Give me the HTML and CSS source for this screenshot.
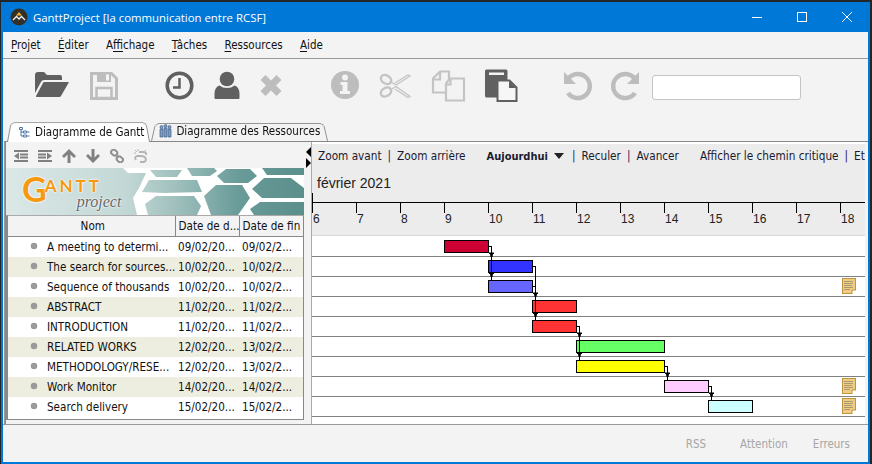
FILE: index.html
```html
<!DOCTYPE html>
<html lang="fr">
  <head>
    <meta charset="UTF-8" />
    <title>GanttProject [la communication entre RCSF]</title>
    <link rel="stylesheet" href="styles.css">
  </head>
  <body>
    <div class="window">
      <div class="titlebar">
        <svg class="app-icon" width="18" height="18" viewBox="0 0 18 18">
          <circle cx="9" cy="9" r="8.5" fill="#333028"/>
          <path d="M9 4l3 3.5H6z" fill="#f0b030"/>
          <path d="M3 12l3.5-3.5L9 11l2.5-2.500L15 12" fill="none" stroke="#eee" stroke-width="1.300"/>
        </svg>
        <span class="title-text">GanttProject [la communication entre RCSF]</span>
        <div class="win-controls">
          <svg width="10" height="10" viewBox="0 0 10 10"><path d="M0 5.500h10" stroke="#fff"/></svg>
          <svg width="10" height="10" viewBox="0 0 10 10"><rect x=".5" y=".5" width="9" height="9" fill="none" stroke="#fff"/></svg>
          <svg width="10" height="10" viewBox="0 0 10 10"><path d="M0 0l10 10M10 0L0 10" stroke="#fff"/></svg>
        </div>
      </div>

      <div class="menubar">
        <span><u>P</u>rojet</span>
        <span><u>É</u>diter</span>
        <span>A<u>f</u>fichage</span>
        <span><u>T</u>âches</span>
        <span><u>R</u>essources</span>
        <span><u>A</u>ide</span>
      </div>

      <div class="toolbar">
        <!-- ouvrir -->
        <svg class="tool" viewBox="0 0 36 36">
          <path d="M1 26V8q0-3 3-3h6l3 3h13q2 0 2 2v3H10q-2 0-3 2z" fill="#606060"/>
          <path d="M10 15h24q1 0 .5 1L27 29q-.5 1-2 1H3q-1.500 0-1-1l7-13q.3-1 1-1z" fill="#606060"/>
        </svg>
        <!-- enregistrer -->
        <svg class="tool gap-16" viewBox="0 0 36 36">
          <path d="M5.500 6.500h20l5 5v20h-25z" fill="none" stroke="#bdbdbd" stroke-width="3"/>
          <path d="M11 6h14v9H11z" fill="#bdbdbd"/>
          <path d="M20 7.500h3v6h-3z" fill="#f3f3f3"/>
          <path d="M10.500 21h15v10h-15z" fill="none" stroke="#bdbdbd" stroke-width="2.500"/>
        </svg>
        <!-- tache -->
        <svg class="tool gap-40" viewBox="0 0 36 36">
          <circle cx="17.500" cy="18.500" r="12.300" fill="none" stroke="#606060" stroke-width="3.500"/>
          <path d="M17.500 11v9.500H11" fill="none" stroke="#606060" stroke-width="2.500"/>
        </svg>
        <!-- ressource -->
        <svg class="tool gap-11" viewBox="0 0 36 36">
          <circle cx="18" cy="12" r="7.300" fill="#606060"/>
          <path d="M6.500 32q-1 0-1-1v-4q0-7 5-8.500 3 2.500 7.500 2.500t7.500-2.500q5 1.500 5 8.500v4q0 1-1 1z" fill="#606060"/>
        </svg>
        <!-- supprimer -->
        <svg class="tool gap-8" viewBox="0 0 36 36">
          <path d="M10 10.500l16 16M26 10.500l-16 16" stroke="#bdbdbd" stroke-width="7"/>
        </svg>
        <!-- proprietes -->
        <svg class="tool gap-38" viewBox="0 0 36 36">
          <circle cx="18" cy="18" r="14" fill="#bdbdbd"/>
          <circle cx="18" cy="10.500" r="3" fill="#f3f3f3"/>
          <path d="M13.500 15h7v9h2.500v3h-10v-3h2.500v-6h-2z" fill="#f3f3f3"/>
        </svg>
        <!-- couper -->
        <svg class="tool gap-15" viewBox="0 0 36 36">
          <g fill="none" stroke="#c4c4c4">
            <ellipse cx="8" cy="12.500" rx="5.500" ry="4" stroke-width="2.500" transform="rotate(30 8 12.500)"/>
            <ellipse cx="8" cy="25" rx="5.500" ry="4" stroke-width="2.500" transform="rotate(-30 8 25)"/>
            <path d="M13 15l5 3 14-9-2-1-13 8M13 22.500l5-3 14 10-2 1-13-8.500" stroke-width="1.300"/>
          </g>
        </svg>
        <!-- copier -->
        <svg class="tool gap-16" viewBox="0 0 36 36">
          <g fill="#f3f3f3" stroke="#c4c4c4" stroke-width="2.200">
            <path d="M10 4.500h9v21H3V11.500z"/>
            <path d="M10 5v7.500H3" fill="none"/>
            <path d="M20 11.500h14v22H16v-17z"/>
            <path d="M20.500 12v5.500H16.500" fill="none"/>
          </g>
        </svg>
        <!-- coller -->
        <svg class="tool gap-16" viewBox="0 0 36 36">
          <path d="M3 4q0-1.500 1.500-1.500h19.500q1.500 0 1.500 1.500v25q0 1.500-1.500 1.500H4.500Q3 30.500 3 29z" fill="#606060"/>
          <path d="M7 5.500h15v2.500H7z" fill="#f3f3f3"/>
          <path d="M15.500 13.500h12l7 7v13.500h-19z" fill="#f6f6f6" stroke="#606060" stroke-width="2"/>
          <path d="M27 14v7h7z" fill="#606060"/>
        </svg>
        <!-- annuler -->
        <svg class="tool gap-41" viewBox="0 0 36 36">
          <path d="M9.500 11.500A12 12 0 1 1 9 26" fill="none" stroke="#bdbdbd" stroke-width="4.500"/>
          <path d="M5 5v12h12z" fill="#bdbdbd"/>
        </svg>
        <!-- refaire -->
        <svg class="tool gap-13" viewBox="0 0 36 36">
          <path d="M26.500 11.500A12 12 0 1 0 27 26" fill="none" stroke="#bdbdbd" stroke-width="4.500"/>
          <path d="M31 5v12H19z" fill="#bdbdbd"/>
        </svg>
        <input class="search" type="text" />
      </div>

      <div class="tabs">
        <div class="tab active">
          <svg width="12" height="12" viewBox="0 0 12 12">
            <path d="M1.500 1.500h3v2h-3zM5.500 5h3v2h-3zM5.500 9h3v2h-3zM3 3.500V10h2.500M3 6h2.500M9 6h2.500M9 10h2.500" fill="none" stroke="#4f74a8"/>
          </svg>
          Diagramme de Gantt
        </div>
        <div class="tab">
          <svg width="13" height="14" viewBox="0 0 13 14">
            <g fill="#7f9cc0" stroke="#3f5f88" stroke-width=".7">
              <circle cx="2.500" cy="3" r="1.500"/><circle cx="10.500" cy="3" r="1.500"/>
              <path d="M1 5h3v8H1zM9 5h3v8H9z"/>
              <circle cx="6.500" cy="2" r="1.500"/><path d="M5 4h3v9H5z"/>
            </g>
          </svg>
          Diagramme des Ressources
        </div>
      </div>

      <div class="main">
        <div class="left">
          <div class="tree-tools">
            <svg width="14" height="12" viewBox="0 0 14 12"><path d="M0 0h14v2H0zM6 3.500h8v2H6zM6 6.500h8v2H6zM0 10h14v2H0zM5 2.500v7L0 6z" fill="#808080"/></svg>
            <svg width="14" height="12" viewBox="0 0 14 12"><path d="M0 0h14v2H0zM0 3.500h8v2H0zM0 6.500h8v2H0zM0 10h14v2H0zM9 2.500v7L14 6z" fill="#808080"/></svg>
            <svg width="14" height="14" viewBox="0 0 14 14"><path d="M7 0l7 7-2 2-3.500-3.500V14h-3V5.500L2 9 0 7z" fill="#808080"/></svg>
            <svg width="14" height="14" viewBox="0 0 14 14"><path d="M7 14L0 7l2-2 3.500 3.500V0h3v8.500L12 5l2 2z" fill="#808080"/></svg>
            <svg width="14" height="14" viewBox="0 0 14 14"><g fill="none" stroke="#909090" stroke-width="2"><rect x="1" y="1" width="6.500" height="5" rx="2.500" transform="rotate(40 4 3.500)"/><rect x="6.500" y="8" width="6.500" height="5" rx="2.500" transform="rotate(40 10 10.500)"/><path d="M5.500 5.500l3 3" stroke-width="1.500"/></g></svg>
            <svg width="14" height="14" viewBox="0 0 14 14"><g fill="none" stroke="#b4b4b4"><path d="M5 3h4q4 0 3 3M2 11q-2-3 1-4h4q4 0 5 3 0 3-3 3H6" stroke-width="1.800"/><path d="M1 1l2 2M4 0v2M0 4h2M12 1l-1 1" stroke-width="1"/></g></svg>
          </div>

          <div class="logo">
            <svg class="logo-bg" width="298" height="47" viewBox="0 0 298 47">
              <defs>
                <linearGradient id="hexa" gradientUnits="userSpaceOnUse" x1="0" y1="0" x2="298" y2="0">
                  <stop offset="0" stop-color="#dbe8e7"/>
                  <stop offset=".4" stop-color="#c3d8d6"/>
                  <stop offset=".58" stop-color="#9dbfbc"/>
                  <stop offset=".78" stop-color="#699b98"/>
                  <stop offset="1" stop-color="#5b8f8c"/>
                </linearGradient>
              </defs>
              <rect width="298" height="47" fill="#fff"/>
              <g fill="url(#hexa)">
                <polygon points="0,0 117,0 122,5 140,5 133,20 127,30 131,47 0,47"/>
                <polygon points="144,2 176,2 171,9 150,9"/>
                <polygon points="143,12 158,12 191,12 196,24 158,25 136,24"/>
                <polygon points="139,36 150,28 188,28 195,38 191,47 142,47"/>
                <polygon points="181,0 208,0 211,3 204,8 186,8"/>
                <polygon points="198,28 210,17 236,17 244,30 232,47 205,47"/>
                <polygon points="211,8 220,1 244,1 251,8 242,15 218,15"/>
                <polygon points="246,21 258,10 285,10 298,20 298,30 256,30"/>
                <polygon points="256,0 298,0 298,7 261,7"/>
                <polygon points="244,41 254,34 298,34 298,47 248,47"/>
              </g>
            </svg>
            <span class="logo-g">G</span>
            <div class="logo-words">
              <div class="logo-antt">ANTT</div>
              <div class="logo-project">project</div>
            </div>
          </div>

          <div class="tree-box">
            <table class="tasks">
              <thead>
                <tr>
                  <th class="col-name">Nom</th>
                  <th class="col-date">Date de d...</th>
                  <th class="col-date">Date de fin</th>
                </tr>
              </thead>
              <tbody>
                <tr><td class="task-name"><i class="dot"></i>A meeting to determi...</td><td>09/02/20...</td><td>09/02/2...</td></tr>
                <tr><td class="task-name"><i class="dot"></i>The search for sources...</td><td>10/02/20...</td><td>10/02/2...</td></tr>
                <tr><td class="task-name"><i class="dot"></i>Sequence of thousands</td><td>10/02/20...</td><td>10/02/2...</td></tr>
                <tr><td class="task-name"><i class="dot"></i>ABSTRACT</td><td>11/02/20...</td><td>11/02/2...</td></tr>
                <tr><td class="task-name"><i class="dot"></i>INTRODUCTION</td><td>11/02/20...</td><td>11/02/2...</td></tr>
                <tr><td class="task-name"><i class="dot"></i>RELATED WORKS</td><td>12/02/20...</td><td>13/02/2...</td></tr>
                <tr><td class="task-name"><i class="dot"></i>METHODOLOGY/RESE...</td><td>12/02/20...</td><td>13/02/2...</td></tr>
                <tr><td class="task-name"><i class="dot"></i>Work Monitor</td><td>14/02/20...</td><td>14/02/2...</td></tr>
                <tr><td class="task-name"><i class="dot"></i>Search delivery</td><td>15/02/20...</td><td>15/02/2...</td></tr>
              </tbody>
            </table>
          </div>
        </div>

        <div class="splitter">
          <i class="arrow-left"></i>
          <i class="arrow-right"></i>
        </div>

        <div class="right">
          <div class="chart-head">
            <div class="chart-nav">
              <span>Zoom avant</span><span class="sep">|</span><span>Zoom arrière</span>
              <b class="today">Aujourdhui</b><i class="caret"></i><span class="sep">|</span>
              <span>Reculer</span><span class="sep">|</span><span>Avancer</span>
              <span class="critical">Afficher le chemin critique</span><span class="sep">|</span><span>Et</span>
            </div>
            <div class="month">février 2021</div>
            <div class="ruler">
              <span>6</span><span>7</span><span>8</span><span>9</span><span>10</span><span>11</span><span>12</span>
              <span>13</span><span>14</span><span>15</span><span>16</span><span>17</span><span>18</span>
            </div>
          </div>

          <svg class="chart" width="553" height="188" viewBox="312 236 553 188">
            <defs>
              <g id="note">
                <rect x=".5" y=".5" width="13" height="15" fill="#f1cb80" stroke="#bd9440"/>
                <path d="M2 3.500h9M2 5.500h9M2 7.500h8M2 9.500h9M2 11.500h6" stroke="#a89a72"/>
                <path d="M10 12h4v4h-4z" fill="#fff"/>
                <path d="M10 16v-4h4" fill="none" stroke="#bd9440"/>
              </g>
              <path id="head" d="M-2.500 0h5v1.500h-1L1 4.500h-2L-1.500 1.500h-1z" fill="#000"/>
            </defs>

            <g stroke="#808080" shape-rendering="crispEdges">
              <path d="M312 256.500h553M312 276.500h553M312 296.500h553M312 316.500h553M312 336.500h553M312 356.500h553M312 376.500h553M312 396.500h553M312 416.500h553"/>
            </g>

            <g stroke="#000" shape-rendering="crispEdges">
              <rect x="444.500" y="240.500" width="44" height="12" fill="#cc0033"/>
              <rect x="488.500" y="260.500" width="44" height="12" fill="#3333ff"/>
              <rect x="488.500" y="280.500" width="44" height="12" fill="#6666ff"/>
              <rect x="532.500" y="300.500" width="44" height="12" fill="#ff3333"/>
              <rect x="532.500" y="320.500" width="44" height="12" fill="#ff3333"/>
              <rect x="576.500" y="340.500" width="88" height="12" fill="#66ff66"/>
              <rect x="576.500" y="360.500" width="88" height="12" fill="#ffff00"/>
              <rect x="664.500" y="380.500" width="44" height="12" fill="#ffccff"/>
              <rect x="708.500" y="400.500" width="44" height="12" fill="#ccffff"/>
              <g fill="none">
                <path d="M488.500 246.500h3v34"/>
                <path d="M532.500 266.500h3v54M532.500 286.500h3"/>
                <path d="M576.500 326.500h3v34"/>
                <path d="M664.500 366.500h3v14"/>
                <path d="M708.500 386.500h3v14"/>
              </g>
            </g>

            <use href="#head" x="491.500" y="252.500"/>
            <use href="#head" x="491.500" y="272.500"/>
            <use href="#head" x="535.500" y="292.500"/>
            <use href="#head" x="535.500" y="312.500"/>
            <use href="#head" x="579.500" y="332.500"/>
            <use href="#head" x="579.500" y="352.500"/>
            <use href="#head" x="667.500" y="372.500"/>
            <use href="#head" x="711.500" y="392.500"/>

            <use href="#note" x="842" y="278"/>
            <use href="#note" x="842" y="378"/>
            <use href="#note" x="842" y="398"/>
          </svg>
        </div>
      </div>

      <div class="statusbar">
        <span class="rss">RSS</span>
        <span>Attention</span>
        <span>Erreurs</span>
      </div>
    </div>
  </body>
</html>
```

FILE: styles.css
```css
body {
  margin: 0;
  width: 872px;
  height: 464px;
  overflow: hidden;
  background: #20262a;
  font-family: "DejaVu Sans", sans-serif;
  font-stretch: condensed;
  font-size: 11.5px;
  color: #111;
}
.window {
  box-sizing: border-box;
  margin: 2px 2px 0 1px;
  height: 462px;
  border: 2px solid #0078d7;
  border-top: none;
  background: #f3f3f3;
  display: flex;
  flex-direction: column;
}

/* barre de titre */
.titlebar {
  height: 30px;
  flex: none;
  background: #0078d7;
  margin: 0 -2px;
  padding-left: 9px;
  display: flex;
  align-items: center;
  color: #fff;
}
.app-icon {
  margin-right: 5px;
}
.title-text {
  font-family: "Open Sans", sans-serif;
  font-stretch: normal;
  font-size: 11.4px;
}
.win-controls {
  margin-left: auto;
  padding-right: 18px;
  display: flex;
  gap: 35px;
}

/* menu */
.menubar {
  height: 26px;
  flex: none;
  border-bottom: 1px solid #999;
  display: flex;
  align-items: center;
  padding-left: 8px;
  gap: 17.300px;
  font-size: 11.5px;
}
.menubar u {
  text-underline-offset: 2px;
}

/* barre d'outils */
.toolbar {
  height: 62px;
  flex: none;
  box-sizing: border-box;
  padding: 8px 0 0 31px;
  display: flex;
  align-items: flex-start;
}
.tool {
  width: 36px;
  height: 36px;
  flex: none;
}
.gap-8 { margin-left: 8px; }
.gap-11 { margin-left: 11px; }
.gap-13 { margin-left: 13px; }
.gap-15 { margin-left: 15px; }
.gap-16 { margin-left: 16px; }
.gap-38 { margin-left: 38px; }
.gap-40 { margin-left: 40px; }
.gap-41 { margin-left: 41px; }
.search {
  box-sizing: border-box;
  width: 149px;
  height: 25px;
  margin: 8px 0 0 8px;
  padding: 0;
  border: 1px solid #c4c4c4;
  border-radius: 3px;
  background: #fff;
}

/* onglets */
.tabs {
  height: 20px;
  flex: none;
  position: relative;
  z-index: 1;
  display: flex;
  padding-left: 4px;
  gap: 1px;
}
.tab {
  position: relative;
  z-index: 0;
  display: flex;
  align-items: center;
  gap: 5px;
  padding: 0 6px 0 11px;
  height: 20px;
}
.tab + .tab {
  padding: 0 8px;
  gap: 4px;
}
.tab::before {
  content: "";
  position: absolute;
  inset: 1px 0 0 0;
  z-index: -1;
  border: 1px solid #8f8f8f;
  border-bottom: none;
  border-radius: 5px 5px 0 0;
  background: #f3f3f3;
  transform: perspective(40px) rotateX(6deg);
  transform-origin: bottom;
}
.tab.active {
  height: 21px;
}
.tab.active::before {
  inset: 0;
  background: #fff;
}

/* zone principale */
.main {
  height: 283px;
  flex: none;
  box-sizing: border-box;
  margin-left: 1px;
  border-left: 1px solid #999;
  border-top: 1px solid #888;
  display: flex;
}
.left {
  box-sizing: border-box;
  width: 299px;
  flex: none;
  border-left: 1px solid #888;
  background: #f3f3f3;
}
.tree-tools {
  height: 26px;
  box-sizing: border-box;
  display: flex;
  align-items: center;
  gap: 10px;
  padding: 2px 0 0 8px;
}
.logo {
  position: relative;
  height: 47px;
  box-sizing: border-box;
  padding: 3px 0 0 16px;
  display: flex;
  color: #f7990f;
  font-family: "Lato", sans-serif;
  font-stretch: normal;
  font-weight: bold;
  text-shadow: 0 0 2px #fff, 0 0 2px #fff;
  overflow: hidden;
}
.logo-bg {
  position: absolute;
  left: 0;
  top: 0;
}
.logo-g {
  position: relative;
  font-size: 34px;
  line-height: 36px;
  height: 36px;
}
.logo-words {
  position: relative;
  margin-left: -2px;
  padding-top: 8px;
}
.logo-antt {
  font-size: 17px;
  line-height: 13px;
  letter-spacing: 3px;
}
.logo-project {
  margin: 1px 0 0 32px;
  font-family: "Liberation Serif", serif;
  font-style: italic;
  font-weight: normal;
  font-size: 16px;
  line-height: 18px;
  color: #666;
}
.tree-box {
  box-sizing: border-box;
  height: 205px;
  border: 1px solid #888;
  border-left-width: 2px;
  border-top: 1px solid #aaa;
  background: #fff;
}
.tasks {
  width: 295px;
  table-layout: fixed;
  border-collapse: collapse;
  font-size: 11.600px;
}
.tasks th {
  height: 20px;
  padding: 0 0 0 3px;
  box-sizing: border-box;
  background: #f3f3f3;
  border-right: 1px solid #888;
  border-bottom: 1px solid #888;
  font-weight: normal;
  text-align: left;
  white-space: nowrap;
  overflow: hidden;
}
.tasks th.col-name {
  width: 167px;
  text-align: center;
}
.tasks th.col-date {
  width: 64px;
}
.tasks td {
  height: 20px;
  padding: 0 0 0 3px;
  white-space: nowrap;
  overflow: hidden;
}
.tasks td.task-name {
  padding-left: 39px;
  position: relative;
}
.tasks tbody tr:nth-child(even) {
  background-color: #eeeee0;
}
.dot {
  position: absolute;
  left: 23px;
  top: 6px;
  width: 6px;
  height: 6px;
  border-radius: 50%;
  background: #9a9a9a;
  box-shadow: 0 0 1px #777;
}

.splitter {
  width: 7px;
  flex: none;
  display: flex;
  flex-direction: column;
  align-items: center;
  gap: 1px;
  padding-top: 5px;
  box-sizing: border-box;
}
.arrow-left {
  border: 5px solid transparent;
  border-left: none;
  border-right: 5px solid #000;
  height: 0;
  margin-left: 2px;
}
.arrow-right {
  border: 5px solid transparent;
  border-right: none;
  border-left: 5px solid #000;
  height: 0;
  margin-left: 2px;
}

.right {
  width: 554px;
  flex: none;
  box-sizing: border-box;
  border-left: 1px solid #aaa;
  background: #fff;
}
.chart-head {
  height: 92px;
  width: 553px;
  box-sizing: border-box;
  margin-top: 2px;
  background: #ececec;
  border-bottom: 1px solid #d8d8d8;
  overflow: hidden;
}
.chart-nav {
  height: 24px;
  display: flex;
  align-items: center;
  padding-left: 6px;
  gap: 6px;
  font-size: 11.700px;
  color: #1a1a30;
  white-space: nowrap;
}
.sep {
  color: #301860;
}
.today {
  margin-left: 15px;
  font-size: 11px;
}
.caret {
  margin-right: 2px;
  border: 5px solid transparent;
  border-top: 6px solid #222;
  border-bottom: none;
}
.critical {
  margin-left: 15px;
}
.month {
  height: 34px;
  padding: 5px 0 0 5px;
  box-sizing: border-box;
  font-family: "Liberation Sans", sans-serif;
  font-stretch: normal;
  font-size: 14px;
  line-height: 20px;
  color: #222;
}
.ruler {
  position: relative;
  display: flex;
  border-top: 1px solid #000;
}
.ruler::before {
  content: "";
  position: absolute;
  left: 0;
  top: -10px;
  width: 1px;
  height: 10px;
  background: #000;
}
.ruler span {
  box-sizing: border-box;
  width: 44px;
  flex: none;
  height: 34px;
  padding: 9px 0 0 1px;
  font-family: "Liberation Sans", sans-serif;
  font-stretch: normal;
  font-size: 12px;
  line-height: 14px;
  color: #222;
  background: linear-gradient(#000, #000) left top / 1px 10px no-repeat;
}
.chart {
  display: block;
}

.statusbar {
  flex: 1;
  box-sizing: border-box;
  border-top: 1px solid #999;
  display: flex;
  align-items: center;
  justify-content: flex-end;
  gap: 25px;
  padding-right: 18px;
  color: #a6a6a6;
}
.rss {
  margin-right: 9px;
}
```
